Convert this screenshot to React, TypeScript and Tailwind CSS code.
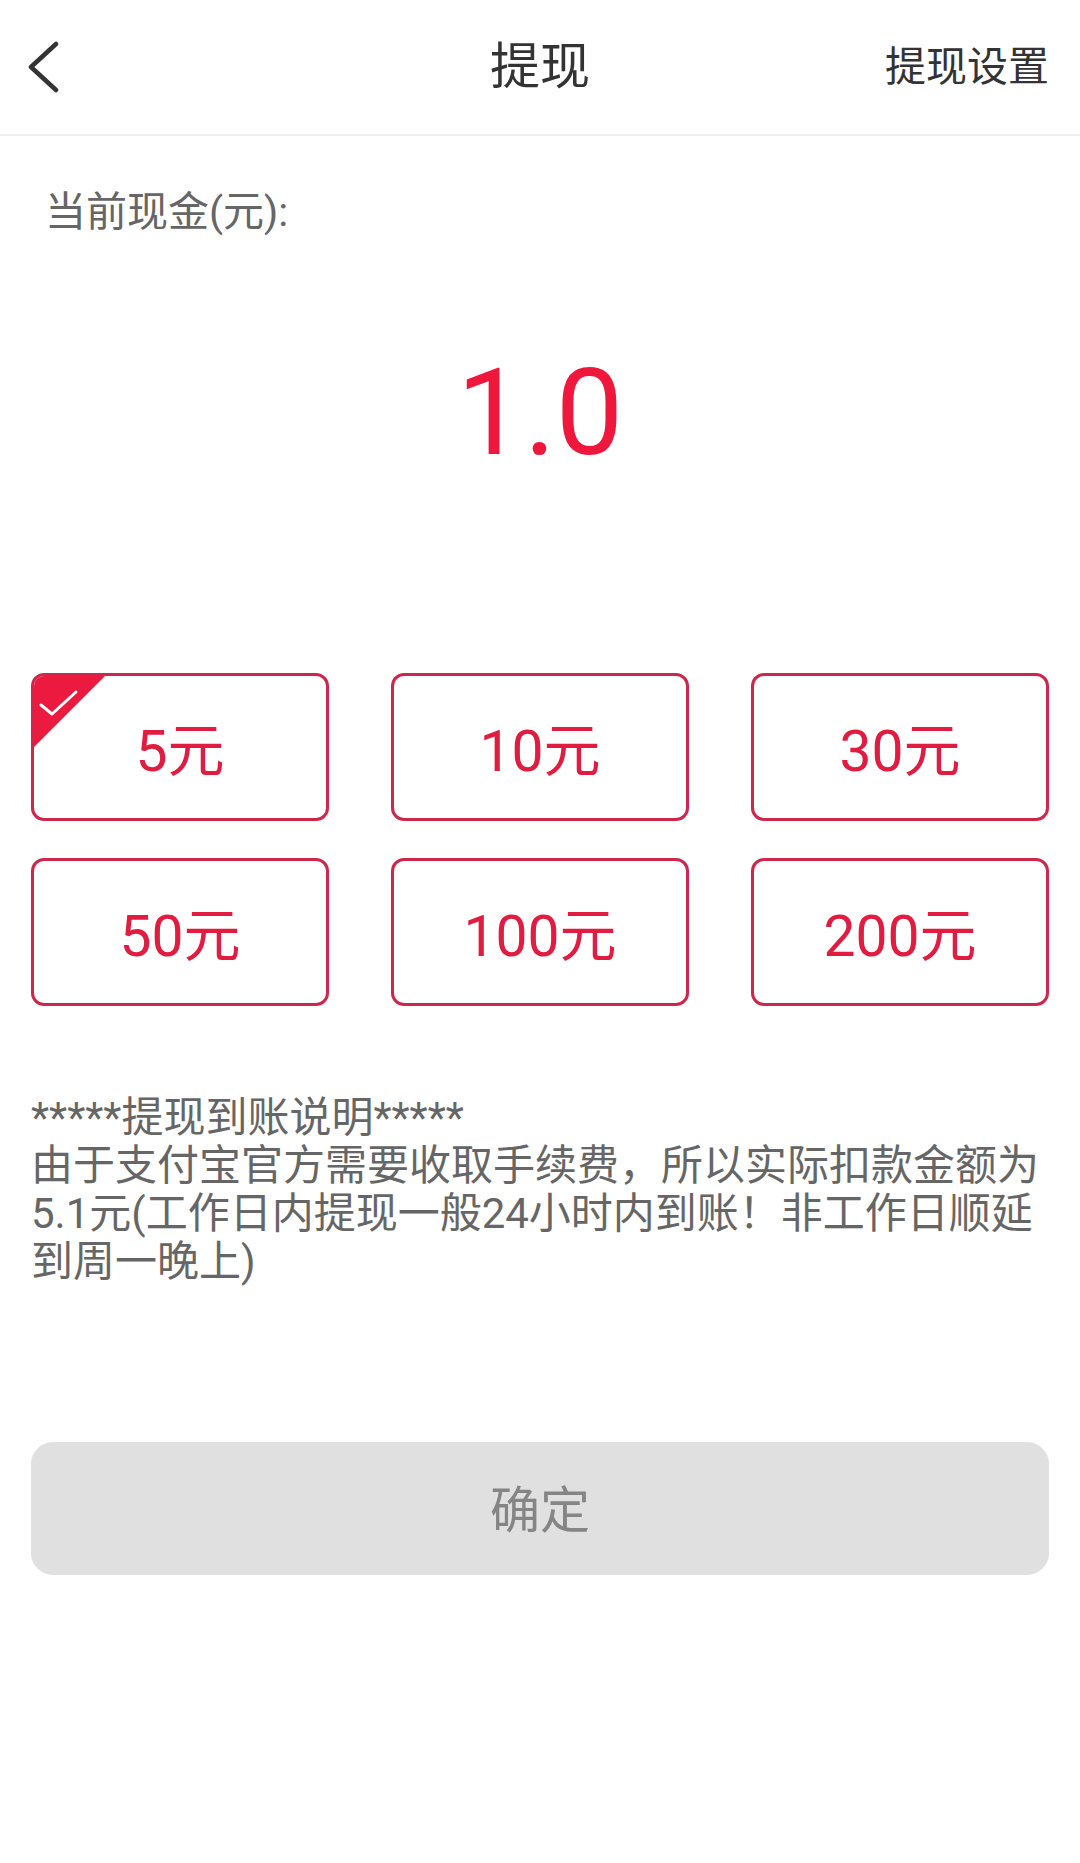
import React, { useState } from 'react';

const amounts = [5, 10, 30, 50, 100, 200];

const font = { fontFamily: 'Roboto, "Noto Sans CJK SC", sans-serif' };

export default function App() {
  const [selected, setSelected] = useState(5);

  return (
    <div className="min-h-screen w-[1080px] bg-white" style={font}>
      {/* Header */}
      <header className="h-[136px] grid grid-cols-[1fr_auto_1fr] items-center border-b-2 border-[#f0f0f0]">
        <div className="pl-[27px]">
          <svg width="32" height="52" viewBox="0 0 32 52" fill="none">
            <path d="M29 3 L4 26 L29 49" stroke="#333" strokeWidth="4.5" strokeLinecap="round" strokeLinejoin="round" />
          </svg>
        </div>
        <h1 className="text-[50px] leading-none text-[#333]">提现</h1>
        <div className="flex justify-end pr-[31px]">
          <span className="text-[41px] leading-none text-[#333]">提现设置</span>
        </div>
      </header>

      {/* Balance */}
      <p className="mt-[52px] pl-[45px] text-[41px] leading-[48px] text-[#666]">当前现金(元):</p>
      <div className="mt-[107px] h-[140px] flex items-center justify-center text-[120px] leading-none text-[#f0173d]">
        1.0
      </div>

      {/* Amount options */}
      <div className="mt-[190px] px-[31px] grid grid-cols-3 gap-x-[62px] gap-y-[37px]">
        {amounts.map((a) => (
          <button
            key={a}
            onClick={() => setSelected(a)}
            className="relative h-[148px] pt-[8px] rounded-[13px] border-[3px] border-[#cc284b] overflow-hidden flex items-center justify-center text-[57px] text-[#e21b40]"
          >
            {selected === a && (
              <div className="absolute left-0 top-0 w-[71px] h-[71px] bg-[#ec1a3e] [clip-path:polygon(0_0,100%_0,0_100%)]">
                <svg className="absolute left-[4px] top-[12px]" width="42" height="30" viewBox="0 0 42 30" fill="none">
                  <path d="M3 17 L14 26 L38 4" stroke="#fff" strokeWidth="3" strokeLinecap="round" strokeLinejoin="round" />
                </svg>
              </div>
            )}
            <span className="leading-none">{a}元</span>
          </button>
        ))}
      </div>

      {/* Notes */}
      <div className="mt-[88px] px-[31px] text-[42px] leading-[48px] text-[#666]">
        <p>*****提现到账说明*****</p>
        <p>由于支付宝官方需要收取手续费，所以实际扣款金额为5.1元(工作日内提现一般24小时内到账！非工作日顺延到周一晚上)</p>
      </div>

      {/* Confirm */}
      <div className="mt-[156px] px-[31px]">
        <button className="w-full h-[133px] pt-[6px] rounded-[22px] bg-[#e0e0e0] text-[50px] text-[#858585]">确定</button>
      </div>
    </div>
  );
}
